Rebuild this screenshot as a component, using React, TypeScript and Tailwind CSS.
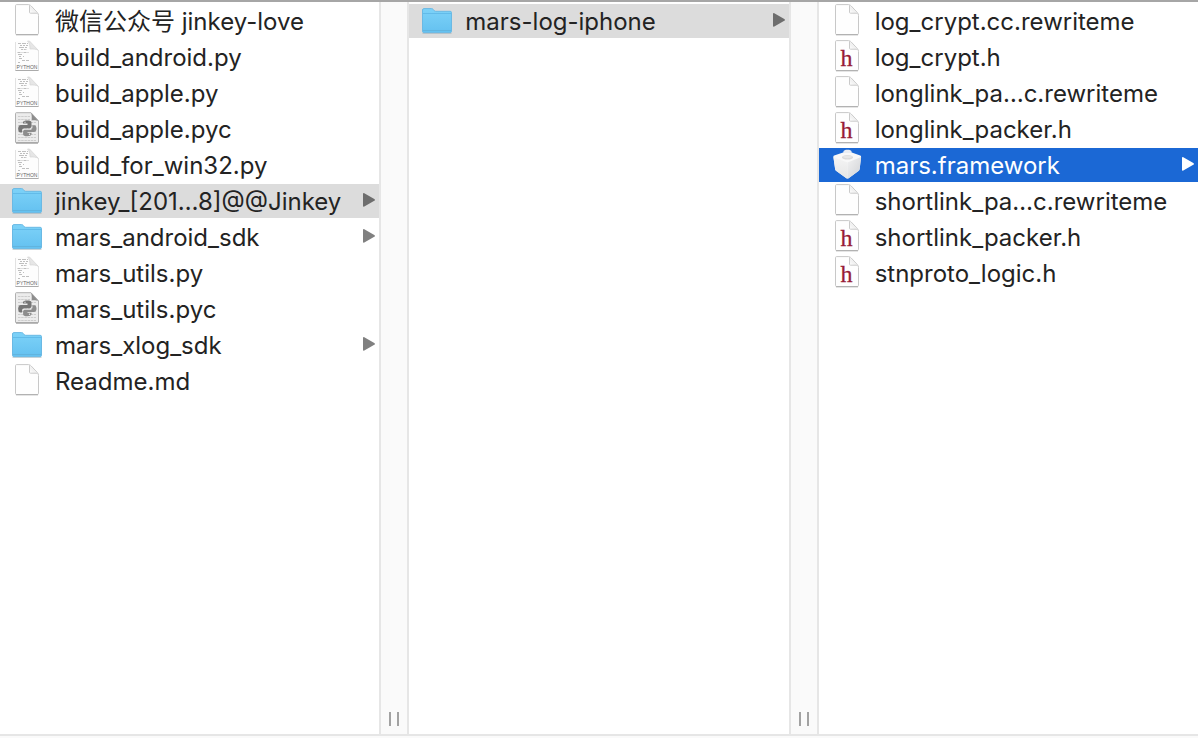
import { Fragment } from "react";

type Kind = "blank" | "header" | "python" | "compiled" | "folder" | "framework";

interface Entry {
  name: string;
  kind: Kind;
  children?: boolean;
  state?: "open" | "active";
}

const columns: { label: string; entries: Entry[] }[] = [
  {
    label: "Project",
    entries: [
      { name: "微信公众号 jinkey-love", kind: "blank" },
      { name: "build_android.py", kind: "python" },
      { name: "build_apple.py", kind: "python" },
      { name: "build_apple.pyc", kind: "compiled" },
      { name: "build_for_win32.py", kind: "python" },
      { name: "jinkey_[201…8]@@Jinkey", kind: "folder", children: true, state: "open" },
      { name: "mars_android_sdk", kind: "folder", children: true },
      { name: "mars_utils.py", kind: "python" },
      { name: "mars_utils.pyc", kind: "compiled" },
      { name: "mars_xlog_sdk", kind: "folder", children: true },
      { name: "Readme.md", kind: "blank" },
    ],
  },
  {
    label: "Build output",
    entries: [{ name: "mars-log-iphone", kind: "folder", children: true, state: "open" }],
  },
  {
    label: "mars-log-iphone",
    entries: [
      { name: "log_crypt.cc.rewriteme", kind: "blank" },
      { name: "log_crypt.h", kind: "header" },
      { name: "longlink_pa…c.rewriteme", kind: "blank" },
      { name: "longlink_packer.h", kind: "header" },
      { name: "mars.framework", kind: "framework", children: true, state: "active" },
      { name: "shortlink_pa…c.rewriteme", kind: "blank" },
      { name: "shortlink_packer.h", kind: "header" },
      { name: "stnproto_logic.h", kind: "header" },
    ],
  },
];

function Gradients() {
  return (
    <svg className="absolute size-0" aria-hidden="true">
      <defs>
        <linearGradient id="folder" x1="0" y1="0" x2="0" y2="1">
          <stop offset="0" stopColor="#7dd2f8" />
          <stop offset="1" stopColor="#64c1f0" />
        </linearGradient>
        <linearGradient id="brickLeft" x1="0" y1="0" x2="0" y2="1">
          <stop offset="0" stopColor="#f4f4f4" />
          <stop offset="1" stopColor="#e6e6e6" />
        </linearGradient>
        <linearGradient id="brickRight" x1="0" y1="0" x2="1" y2="1">
          <stop offset="0" stopColor="#f2f2f2" />
          <stop offset="1" stopColor="#d0d2d6" />
        </linearGradient>
        <linearGradient id="fold" x1="0" y1="1" x2="1" y2="0">
          <stop offset="0" stopColor="#ffffff" />
          <stop offset="1" stopColor="#dcdcdc" />
        </linearGradient>
      </defs>
    </svg>
  );
}

function Sheet() {
  return (
    <>
      <path
        d="M5.600 .6h11.700c1.200 0 2 .4 2.900 1.400l6 6.400c.9 1 1.300 1.900 1.300 3.100v17.900c0 .7-.4 1.100-1.100 1.100H5.600c-.7 0-1.100-.4-1.100-1.100V1.700c0-.7.4-1.100 1.100-1.100z"
        fill="#fefefe"
        stroke="#c8c8c8"
        strokeWidth="1"
      />
      <path d="M18.500 1.200v7.100c0 .6.300.9.900.9h7.300" fill="url(#fold)" stroke="#cacaca" strokeWidth="1" />
      <path d="M5 30.800h22" stroke="#a8a8a8" strokeWidth="1" />
    </>
  );
}

function PythonSheet() {
  return (
    <>
      <path d="M4.500 1h14l9 9.500V30.500h-23z" fill="#fdfdfd" />
      <path d="M4.500 2v28.500h23V10.500" fill="none" stroke="#e2e2e2" strokeWidth="1" />
      <path d="M4.500 30.500h23" stroke="#ababab" strokeWidth="1" />
      <path d="M16.500 1h2l9 9.500c-2-1.700-5.500-1.500-8.500-1.500 0-3-.3-6-2.500-8z" fill="#e6e6e6" stroke="#d4d4d4" strokeWidth=".7" />
      <g stroke="#b8b8b8" strokeWidth=".9" fill="none">
        <path d="M7 3.500h10" strokeDasharray="3 1 4 1" />
        <path d="M9 5.500h9" strokeDasharray="2 1" />
        <path d="M8 7.500h9" strokeDasharray="5 1 2 1" />
        <path d="M10 9.500h6" strokeDasharray="2 .8" />
        <path d="M6.500 12.500h12" strokeDasharray="3 1 1 1" />
        <path d="M7 14.500h4" />
        <path d="M8 16.500h5" strokeDasharray="2 2" />
        <path d="M8 18.500h4M11 20.500h7" strokeDasharray="3 1" />
        <path d="M7 22.500h3" strokeDasharray="2 1" />
      </g>
      <text x="16" y="29" textAnchor="middle" fontSize="5" fontFamily="Liberation Sans, sans-serif" fill="#666">
        PYTHON
      </text>
    </>
  );
}

function CompiledSheet() {
  return (
    <>
      <path
        d="M5.300 .7h14.700l7.500 8v21.300c0 .5-.3.800-.8.800H5.300c-.5 0-.8-.3-.8-.8V1.500c0-.5.3-.8.8-.8z"
        fill="#ececec"
        stroke="#b0b0b0"
        strokeWidth="1"
      />
      <g stroke="#cccccc" strokeWidth="1" strokeDasharray="2.500 .7">
        <path d="M7 4.500h12M7 7.500h12M7 10.500h18M7 13.500h18M7 16.500h18M7 19.500h18M7 22.500h18M7 25.500h18M7 28.500h18" />
      </g>
      <path d="M20 .8c1 2.500.8 5 .6 7.600 2.500-.2 5.200-.2 6.900.9z" fill="#8c8c8c" />
      <path
        d="M12 11.500v-1.300c0-1.200 1.800-1.700 4.300-1.700s4.200.5 4.200 1.700v4.300c0 1.200-1 1.700-2.300 1.700h-4.400c-1.700 0-2.700.9-2.700 2.300v1.900H9.600c-1.800 0-2.400-1.700-2.400-3.700s.9-3.600 2.700-3.600h6.600v-1.600z"
        fill="#767676"
      />
      <path
        d="M20.500 20.800v1.400c0 1.200-1.900 2-4.300 2s-4.100-.7-4.100-1.800v-2.900c0-1.200 1-1.700 2.300-1.700h4.300c1.700 0 2.700-.9 2.700-2.300v-2.200h1.700c1.800 0 2.400 1.700 2.400 3.500s-.9 3.200-2.700 3.200h-6.300v.8z"
        fill="#8d8d8d"
      />
      <circle cx="14" cy="10.300" r=".7" fill="#ddd" />
      <circle cx="18.500" cy="22.300" r=".7" fill="#eee" />
      <path d="M5 31h22" stroke="#8f8f8f" strokeWidth="1" />
    </>
  );
}

function Folder() {
  return (
    <>
      <path d="M1.500 29.300h29" stroke="#9aa7ae" strokeWidth="1" opacity=".6" />
      <path
        d="M1.500 6c0-.8.500-1.400 1.300-1.400h7.700c.8 0 1.200.2 1.700.8l1 1.200c.4.500.8.700 1.500.7h14.500c.8 0 1.300.5 1.300 1.300v18.700c0 .8-.5 1.300-1.300 1.300H2.800c-.8 0-1.300-.5-1.300-1.300z"
        fill="url(#folder)"
        stroke="#6ab9e4"
        strokeWidth="1"
      />
      <path d="M2 9.500h28" stroke="#62bbe9" strokeWidth="1" />
      <path d="M2 26.500h28" stroke="#62b4de" strokeWidth="1" />
    </>
  );
}

function Framework() {
  return (
    <g transform="translate(0 1)">
      <path
        d="M3.200 6.600 15 2.500c1-.3 2-.3 3 0l11.200 4.100c.7.300 1 .8.900 1.500l-1.400 11.600c-.2 1.200-.6 1.900-1.600 2.600L17.600 29.200c-.8.500-1.400.5-2.200 0L5.700 22.300c-1-.7-1.500-1.400-1.600-2.600L2.400 8.100c-.1-.7.100-1.200.8-1.500z"
        fill="#f8f8f8"
      />
      <path d="M2.400 8 16.500 13.500V29.600c-.4 0-.7-.1-1.100-.4L5.700 22.300c-1-.7-1.500-1.400-1.600-2.600z" fill="url(#brickLeft)" />
      <path d="M30.100 8 16.500 13.500V29.600c.4 0 .7-.1 1.100-.4l9.500-6.900c1-.7 1.400-1.400 1.600-2.600z" fill="url(#brickRight)" />
      <path d="M12.500 4V2.500c0-1.100 1.800-1.700 4-1.700s4 .6 4 1.700V4z" fill="#e9edf3" />
      <ellipse cx="16.500" cy="8.300" rx="5.500" ry="2.300" fill="#dadada" />
      <ellipse cx="16.500" cy="7.800" rx="4.500" ry="1.400" fill="#e6e6e6" />
    </g>
  );
}

function FileIcon({ kind }: { kind: Kind }) {
  return (
    <svg viewBox="0 0 32 32" fill="none" className="size-8 shrink-0 self-start" aria-hidden="true">
      {(kind === "blank" || kind === "header") && <Sheet />}
      {kind === "header" && (
        <text x="15.500" y="26" textAnchor="middle" fontSize="24" fontFamily="Liberation Serif, serif" fill="#971b36" stroke="#971b36" strokeWidth=".3">
          h
        </text>
      )}
      {kind === "python" && <PythonSheet />}
      {kind === "compiled" && <CompiledSheet />}
      {kind === "folder" && <Folder />}
      {kind === "framework" && <Framework />}
    </svg>
  );
}

const rowStyle = {
  plain: "text-[#232323]",
  open: "bg-[#dcdcdc] text-[#232323]",
  active: "bg-[#1b68d5] text-white",
};

const arrowStyle = {
  plain: "text-[#808080]",
  open: "text-[#6d6d6d]",
  active: "text-white",
};

function Row({ entry, inset }: { entry: Entry; inset: string }) {
  const state = entry.state ?? "plain";
  return (
    <li>
      <button type="button" className={`flex h-[34px] w-full items-center gap-3 pr-1 text-left ${inset} ${rowStyle[state]}`}>
        <FileIcon kind={entry.kind} />
        <span className="min-w-0 flex-1 pt-0.5 whitespace-nowrap">{entry.name}</span>
        {entry.children && (
          <svg viewBox="0 0 12 14" className={`mb-0.5 h-3.5 w-3 shrink-0 ${arrowStyle[state]}`} aria-hidden="true">
            <path d="M0 1C0 .2.6-.1 1.300.3l10 5.700c.9.500.9 1.300 0 1.800l-10 5.800C.6 14 0 13.700 0 13z" fill="currentColor" />
          </svg>
        )}
      </button>
    </li>
  );
}

function Divider() {
  return (
    <div className="flex w-[30px] shrink-0 items-end justify-center gap-1.5 border-x-2 border-[#e6e6e6] bg-[#fafafa] pb-2">
      <span className="h-3.5 w-0.5 bg-[#a2a2a2]" />
      <span className="h-3.5 w-0.5 bg-[#a2a2a2]" />
    </div>
  );
}

export default function App() {
  return (
    <main className="flex h-screen flex-col bg-[#fafafa] pb-0.5 font-['Inter','Noto_Sans_CJK_SC',sans-serif] text-[24px] leading-8">
      <Gradients />
      <div className="flex min-h-0 flex-1 border-y-2 border-t-[#a6a6a6] border-b-[#e6e6e6] bg-white">
        {columns.map((column, index) => (
          <Fragment key={column.label}>
            {index > 0 && <Divider />}
            <ul aria-label={column.label} className="flex min-w-0 flex-1 flex-col gap-0.5 overflow-hidden pt-0.5">
              {column.entries.map((entry) => (
                <Row key={entry.name} entry={entry} inset={index === 0 ? "pl-[11px]" : "pl-3"} />
              ))}
            </ul>
          </Fragment>
        ))}
      </div>
    </main>
  );
}
